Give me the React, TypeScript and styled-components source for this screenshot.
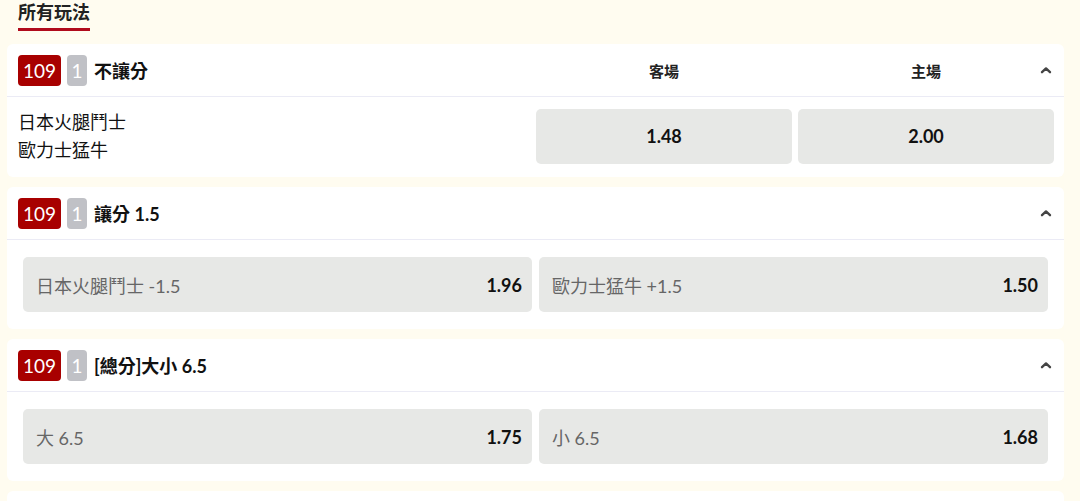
import styled, { createGlobalStyle } from "styled-components";

const GlobalStyle = createGlobalStyle`
  html, body {
    margin: 0;
    padding: 0;
    background: #fffcf0;
  }
  * {
    box-sizing: border-box;
  }
  body {
    font-family: Lato, "Noto Sans CJK TC", sans-serif;
    color: #1a1a1a;
  }
`;

const Page = styled.div`
  min-height: 100vh;
  padding: 0 16px 0 7px;
`;

const TabBar = styled.div`
  display: flex;
  padding-left: 11px;
  margin-bottom: 13px;
`;

const Tab = styled.div<{ $active?: boolean }>`
  font-size: 18px;
  line-height: 24px;
  font-weight: 700;
  color: #222;
  padding-bottom: 4px;
  border-bottom: 3px solid ${({ $active }) => ($active ? "#b00a1c" : "transparent")};
`;

const Card = styled.section<{ $stub?: boolean }>`
  background: #fff;
  border-radius: 6px;
  margin-bottom: 10px;
  min-height: ${({ $stub }) => ($stub ? "53px" : "0")};
`;

const Header = styled.div`
  position: relative;
  height: 53px;
  padding: 0 10px 0 11px;
  border-bottom: 1px solid #ebebf5;
  display: grid;
  grid-template-columns: 1fr 256px 256px;
  column-gap: 6px;
  align-items: center;
`;

const TitleGroup = styled.div`
  display: flex;
  align-items: center;
  gap: 6px;
`;

const Badge = styled.span<{ $tone: "red" | "gray" }>`
  display: inline-flex;
  align-items: center;
  justify-content: center;
  height: 31px;
  min-width: 20px;
  padding: 0 ${({ $tone }) => ($tone === "red" ? "5px" : "0")};
  border-radius: 4px;
  background: ${({ $tone }) => ($tone === "red" ? "#a80000" : "#c0c1c6")};
  color: #fff;
  font-size: 19px;
  font-weight: 400;
`;

const Title = styled.span`
  margin-left: 1px;
  font-size: 18px;
  font-weight: 700;
  color: #111;
`;

const ColLabel = styled.span`
  text-align: center;
  font-size: 15px;
  font-weight: 700;
  color: #222;
`;

const Toggle = styled.button`
  position: absolute;
  right: 11px;
  top: 50%;
  transform: translateY(-50%);
  width: 14px;
  height: 14px;
  padding: 0;
  border: none;
  background: none;
  display: flex;
  align-items: center;
  justify-content: center;
  cursor: pointer;
`;

const Body = styled.div<{ $layout: "match" | "pair" }>`
  display: grid;
  grid-template-columns: ${({ $layout }) => ($layout === "match" ? "1fr 256px 256px" : "1fr 1fr")};
  column-gap: ${({ $layout }) => ($layout === "match" ? "6px" : "7px")};
  align-items: center;
  padding: ${({ $layout }) => ($layout === "match" ? "11px 10px 13px 11px" : "17px 16px 17px 16px")};
`;

const Teams = styled.div`
  display: flex;
  flex-direction: column;
  font-size: 18px;
  line-height: 28px;
  color: #111;
`;

const OddsButton = styled.button<{ $centered?: boolean }>`
  height: 55px;
  border: none;
  border-radius: 5px;
  background: #e7e8e6;
  display: flex;
  align-items: center;
  justify-content: ${({ $centered }) => ($centered ? "center" : "space-between")};
  padding: ${({ $centered }) => ($centered ? "0" : "0 10px 0 13px")};
  font-family: inherit;
  cursor: pointer;
`;

const OptionLabel = styled.span`
  font-size: 18px;
  color: #666;
`;

const Price = styled.span`
  font-size: 18px;
  font-weight: 700;
  color: #111;
`;

const Chevron = () => (
  <svg width="12" height="8" viewBox="0 0 12 8" fill="none">
    <path d="M2 6.2L6 2.4L10 6.2" stroke="#444" strokeWidth="2.4" strokeLinecap="round" strokeLinejoin="round" />
  </svg>
);

type Option = { label: string; price: string };

const pairMarkets: { title: string; options: Option[] }[] = [
  {
    title: "讓分 1.5",
    options: [
      { label: "日本火腿鬥士 -1.5", price: "1.96" },
      { label: "歐力士猛牛 +1.5", price: "1.50" },
    ],
  },
  {
    title: "[總分]大小 6.5",
    options: [
      { label: "大 6.5", price: "1.75" },
      { label: "小 6.5", price: "1.68" },
    ],
  },
];

function MarketTitle({ title }: { title: string }) {
  return (
    <TitleGroup>
      <Badge $tone="red">109</Badge>
      <Badge $tone="gray">1</Badge>
      <Title>{title}</Title>
    </TitleGroup>
  );
}

export default function App() {
  return (
    <>
      <GlobalStyle />
      <Page>
        <TabBar>
          <Tab $active>所有玩法</Tab>
        </TabBar>

        <Card>
          <Header>
            <MarketTitle title="不讓分" />
            <ColLabel>客場</ColLabel>
            <ColLabel>主場</ColLabel>
            <Toggle aria-label="收起">
              <Chevron />
            </Toggle>
          </Header>
          <Body $layout="match">
            <Teams>
              <span>日本火腿鬥士</span>
              <span>歐力士猛牛</span>
            </Teams>
            <OddsButton $centered>
              <Price>1.48</Price>
            </OddsButton>
            <OddsButton $centered>
              <Price>2.00</Price>
            </OddsButton>
          </Body>
        </Card>

        {pairMarkets.map((m) => (
          <Card key={m.title}>
            <Header>
              <MarketTitle title={m.title} />
              <Toggle aria-label="收起">
                <Chevron />
              </Toggle>
            </Header>
            <Body $layout="pair">
              {m.options.map((o) => (
                <OddsButton key={o.label}>
                  <OptionLabel>{o.label}</OptionLabel>
                  <Price>{o.price}</Price>
                </OddsButton>
              ))}
            </Body>
          </Card>
        ))}

        <Card $stub />
      </Page>
    </>
  );
}
